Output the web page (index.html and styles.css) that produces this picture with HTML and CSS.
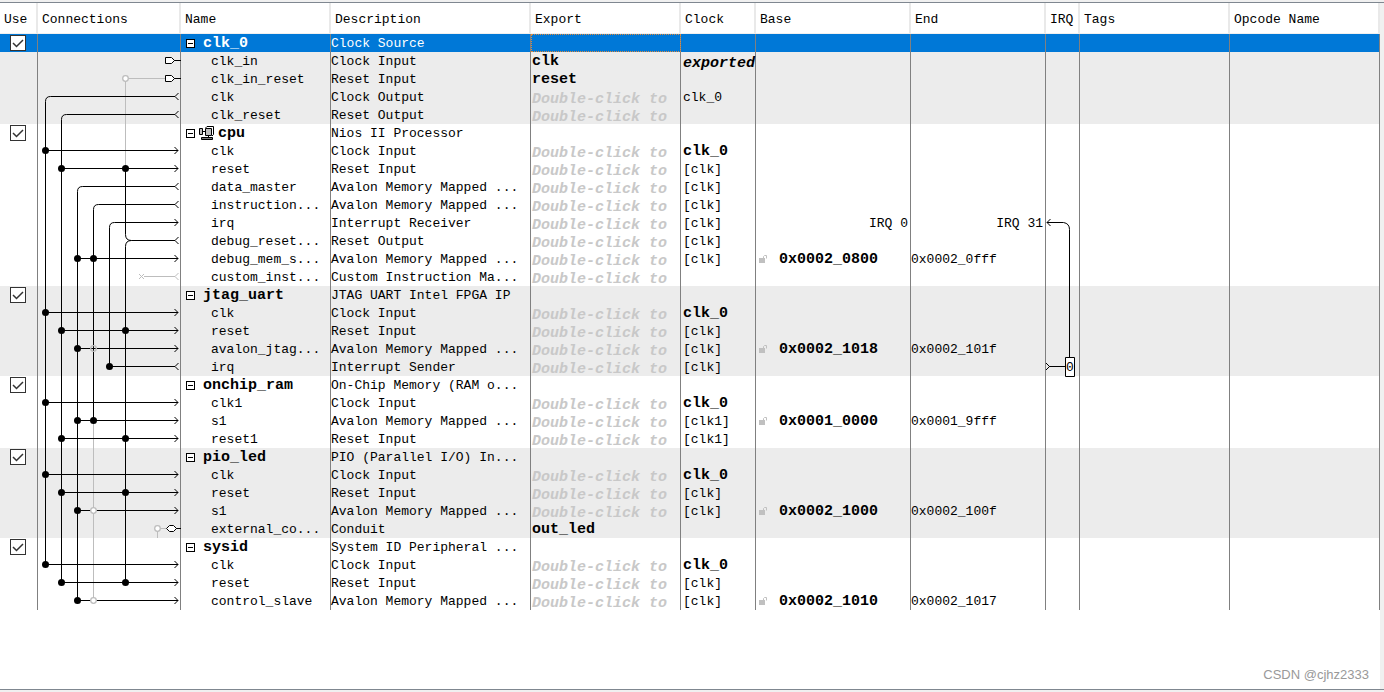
FILE: index.html
```
<!DOCTYPE html>
<html lang="en">
<head>
<meta charset="utf-8">
<title>System Contents</title>
<link rel="stylesheet" href="styles.css">
<script src="table.js" defer></script>
</head>
<body>
<svg class="defs" aria-hidden="true">
  <symbol id="cpu" viewBox="0 0 15 14">
    <path d="M6.500 2.500h6v7h-6z" fill="#c0c0c0" stroke="#000"/>
    <path d="M6.500 2L8 .5H14.500V8.500L13 10" fill="none" stroke="#000"/>
    <path d="M.5 2.500h3v6h-3z" fill="#c0c0c0" stroke="#000"/>
    <path d="M4 5.500h2M9.500 9.500v2M2.500 11.500h11v2h-11z" fill="#777" stroke="#000"/>
  </symbol>
  <symbol id="lock" viewBox="0 0 9 8">
    <path d="M0 3h6v5H0z" fill="#c0c0c0"/>
    <path d="M4.500 3V1.500L5.500 .5H7.500V3.500" fill="none" stroke="#c0c0c0"/>
  </symbol>
  <symbol id="wires" viewBox="38 34 143 576">
    <g fill="none" stroke="#bdbdbd">
      <path d="M125.500 78.500H165M125.500 78.500V168M93.500 420V600M157.500 528.500H166M157.500 528V538M144 276.500H175M178.500 273L175 276.500L178.500 280M139 274L144 279M139 279L144 274"/>
    </g>
    <g fill="none" stroke="#000">
      <path d="M45.500 564V101.500Q45.500 96.500 50.500 96.500H175M61.500 582V119.500Q61.500 114.500 66.500 114.500H175M77.500 600V191.500Q77.500 186.500 82.500 186.500H175M93.500 420V209.500Q93.500 204.500 98.500 204.500H175M109.500 366V227.500Q109.500 222.500 114.500 222.500H178M125.500 168V234.500Q125.500 240.500 131.500 240.500H175M125.500 582V246.500Q125.500 240.500 131.500 240.500M109.500 366.500H175"/>
      <path d="M45 150.500H178M61 168.500H178M77 258.500H178M45 312.500H178M61 330.500H178M77 348.500H178M45 402.500H178M77 420.500H178M61 438.500H178M45 474.500H178M61 492.500H178M77 510.500H178M45 564.500H178M61 582.500H178M77 600.500H178"/>
      <path d="M178.500 93L175 96.500L178.500 100M178.500 111L175 114.500L178.500 118M178.500 183L175 186.500L178.500 190M178.500 201L175 204.500L178.500 208M178.500 237L175 240.500L178.500 244M178.500 363L175 366.500L178.500 370"/>
      <path d="M174.500 147L178 150.500L174.500 154M174.500 165L178 168.500L174.500 172M174.500 219L178 222.500L174.500 226M174.500 255L178 258.500L174.500 262M174.500 309L178 312.500L174.500 316M174.500 327L178 330.500L174.500 334M174.500 345L178 348.500L174.500 352M174.500 399L178 402.500L174.500 406M174.500 417L178 420.500L174.500 424M174.500 435L178 438.500L174.500 442M174.500 471L178 474.500L174.500 478M174.500 489L178 492.500L174.500 496M174.500 507L178 510.500L174.500 514M174.500 561L178 564.500L174.500 568M174.500 579L178 582.500L174.500 586M174.500 597L178 600.500L174.500 604"/>
      <path d="M174 60.500H181M174 78.500H181M176 528.500H181"/>
    </g>
    <g fill="#fff" stroke="#bdbdbd" stroke-width="1.300">
      <circle cx="125.500" cy="78.500" r="2.800"/><circle cx="157.500" cy="528.500" r="2.800"/>
      <circle cx="93.500" cy="510.500" r="2.800"/><circle cx="93.500" cy="600.500" r="2.800"/>
      <circle cx="93.500" cy="348.500" r="2.800" fill="none"/>
    </g>
    <path d="M165.500 57.500H171.500L174.500 60.500L171.500 63.500H165.500ZM165.500 75.500H171.500L174.500 78.500L171.500 81.500H165.500ZM166.500 528.500L169.500 525.500H173.500L176.500 528.500L173.500 531.500H169.500Z" fill="#fff" stroke="#000"/>
    <g>
      <circle cx="45.500" cy="150.500" r="3.500"/><circle cx="61.500" cy="168.500" r="3.500"/><circle cx="125.500" cy="168.500" r="3.500"/>
      <circle cx="77.500" cy="258.500" r="3.500"/><circle cx="93.500" cy="258.500" r="3.500"/><circle cx="45.500" cy="312.500" r="3.500"/>
      <circle cx="61.500" cy="330.500" r="3.500"/><circle cx="125.500" cy="330.500" r="3.500"/><circle cx="77.500" cy="348.500" r="3.500"/>
      <circle cx="109.500" cy="366.500" r="3.500"/><circle cx="45.500" cy="402.500" r="3.500"/><circle cx="77.500" cy="420.500" r="3.500"/>
      <circle cx="93.500" cy="420.500" r="3.500"/><circle cx="61.500" cy="438.500" r="3.500"/><circle cx="125.500" cy="438.500" r="3.500"/>
      <circle cx="45.500" cy="474.500" r="3.500"/><circle cx="61.500" cy="492.500" r="3.500"/><circle cx="125.500" cy="492.500" r="3.500"/>
      <circle cx="77.500" cy="510.500" r="3.500"/><circle cx="45.500" cy="564.500" r="3.500"/><circle cx="61.500" cy="582.500" r="3.500"/>
      <circle cx="125.500" cy="582.500" r="3.500"/><circle cx="77.500" cy="600.500" r="3.500"/>
    </g>
  </symbol>
  <symbol id="irqwire" viewBox="1046 214 33 164">
    <path d="M1047 222.500H1063.500Q1069.500 223.500 1069.500 229.500V357M1050.500 219L1047 222.500L1050.500 226M1046 363L1049.500 366.500L1046 370M1049 366.500H1065" fill="none" stroke="#000"/>
    <path d="M1065.500 357.500h9v19h-9z" fill="#fff" stroke="#000"/>
  </symbol>
</svg>
<main class="panel">
  <table class="contents">
    <colgroup>
      <col class="c-use"><col class="c-conn"><col class="c-name"><col class="c-desc"><col class="c-export"><col class="c-clock"><col class="c-base"><col class="c-end"><col class="c-irq"><col class="c-tags"><col>
    </colgroup>
    <thead>
      <tr><th>Use</th><th>Connections</th><th>Name</th><th>Description</th><th>Export</th><th>Clock</th><th>Base</th><th>End</th><th>IRQ</th><th>Tags</th><th>Opcode Name</th></tr>
    </thead>
  </table>
  <footer class="watermark">CSDN @cjhz2333</footer>
</main>
</body>
</html>
```
FILE: table.js
```
const HINT = "Double-click to";
const AVALON = "Avalon Memory Mapped ...";

// Port rows: [name, description, export, clock, base, end]
const modules = [
  { name: "clk_0", desc: "Clock Source", selected: true, ports: [
    ["clk_in", "Clock Input", "clk", "exported"],
    ["clk_in_reset", "Reset Input", "reset"],
    ["clk", "Clock Output", HINT, "clk_0 "],
    ["clk_reset", "Reset Output", HINT]] },
  { name: "cpu", desc: "Nios II Processor", icon: true, ports: [
    ["clk", "Clock Input", HINT, "clk_0"],
    ["reset", "Reset Input", HINT, "[clk]"],
    ["data_master", AVALON, HINT, "[clk]"],
    ["instruction...", AVALON, HINT, "[clk]"],
    ["irq", "Interrupt Receiver", HINT, "[clk]", "IRQ 0", "IRQ 31"],
    ["debug_reset...", "Reset Output", HINT, "[clk]"],
    ["debug_mem_s...", AVALON, HINT, "[clk]", "0x0002_0800", "0x0002_0fff"],
    ["custom_inst...", "Custom Instruction Ma...", HINT]] },
  { name: "jtag_uart", desc: "JTAG UART Intel FPGA IP", ports: [
    ["clk", "Clock Input", HINT, "clk_0"],
    ["reset", "Reset Input", HINT, "[clk]"],
    ["avalon_jtag...", AVALON, HINT, "[clk]", "0x0002_1018", "0x0002_101f"],
    ["irq", "Interrupt Sender", HINT, "[clk]"]] },
  { name: "onchip_ram", desc: "On-Chip Memory (RAM o...", ports: [
    ["clk1", "Clock Input", HINT, "clk_0"],
    ["s1", AVALON, HINT, "[clk1]", "0x0001_0000", "0x0001_9fff"],
    ["reset1", "Reset Input", HINT, "[clk1]"]] },
  { name: "pio_led", desc: "PIO (Parallel I/O) In...", ports: [
    ["clk", "Clock Input", HINT, "clk_0"],
    ["reset", "Reset Input", HINT, "[clk]"],
    ["s1", AVALON, HINT, "[clk]", "0x0002_1000", "0x0002_100f"],
    ["external_co...", "Conduit", "out_led"]] },
  { name: "sysid", desc: "System ID Peripheral ...", ports: [
    ["clk", "Clock Input", HINT, "clk_0"],
    ["reset", "Reset Input", HINT, "[clk]"],
    ["control_slave", AVALON, HINT, "[clk]", "0x0002_1010", "0x0002_1017"]] }
];

const td = (html = "", cls = "") => `<td class="${cls}">${html}</td>`;

function moduleRow(m) {
  const wires = m.selected ? '<svg class="wires"><use href="#wires"/></svg>' : "";
  const icon = m.icon ? '<svg class="cpu"><use href="#cpu"/></svg>' : "";
  return `<tr class="module${m.selected ? " selected" : ""}">` +
    td(`<input type="checkbox" checked aria-label="Use ${m.name}">`, "use") +
    td(wires, "conn") +
    td(`<div class="title"><button class="toggle" aria-label="Collapse ${m.name}"></button>${icon}<span>${m.name}</span></div>`, "strong") +
    td(m.desc) + td("", m.selected ? "focus" : "") +
    td().repeat(6) + "</tr>";
}

function portRow([name, desc, exp, clock = "", base = "", end = ""]) {
  const isIrq = base.startsWith("IRQ");
  const clockClass = clock === "exported" ? "clock strong slanted" : clock === "clk_0" ? "clock strong" : "clock";
  const baseCell = !base ? td() : isIrq ? td(base, "range") :
    td(`<div class="address"><svg class="lock"><use href="#lock"/></svg><span>${base}</span></div>`, "strong");
  const irqWire = '<svg class="irqwire"><use href="#irqwire"/></svg><span class="irqnum">0</span>';
  return "<tr>" + td() + td() + td(name, "port") + td(desc) +
    td(exp, exp === HINT ? "strong slanted hint" : "strong") +
    td(clock.trim(), clockClass) + baseCell + td(end, isIrq ? "range" : "") +
    td(isIrq ? irqWire : "", isIrq ? "irq" : "") + td() + td() + "</tr>";
}

document.querySelector(".contents").insertAdjacentHTML("beforeend",
  modules.map(m => `<tbody>${moduleRow(m)}${m.ports.map(portRow).join("")}</tbody>`).join(""));
```
FILE: styles.css
```
* { box-sizing: border-box; }

body {
  margin: 0;
  min-height: 100vh;
  padding: 2px 0;
  display: flex;
  flex-direction: column;
  background: #f0f0f0;
  color: #000;
  font: 13px/15px "Liberation Mono", monospace;
}

.defs { display: none; }

.panel {
  flex: 1;
  display: flex;
  flex-direction: column;
  justify-content: space-between;
  border-top: 1px solid #7f8790;
  border-bottom: 1px solid #7f8790;
  padding-right: 4px;
  background: linear-gradient(#fff, #fff) content-box;
}

.contents {
  width: 100%;
  table-layout: fixed;
  border-collapse: separate;
  border-spacing: 0;
}

.c-use { width: 38px; }
.c-conn { width: 143px; }
.c-name, .c-export, .c-tags { width: 150px; }
.c-desc { width: 200px; }
.c-clock { width: 75px; }
.c-base { width: 155px; }
.c-end { width: 135px; }
.c-irq { width: 34px; }

th {
  height: 31px;
  padding: 3px 0 0 4px;
  border-right: 2px solid #e9e9e9;
  border-bottom: 1px solid #f0f0f0;
  text-align: left;
  font-weight: normal;
  white-space: nowrap;
}

td {
  height: 18px;
  padding: 2px 0 0;
  border-right: 1px solid #808080;
  vertical-align: top;
  white-space: nowrap;
}

tbody:nth-of-type(odd) { background: #ececec; }
.selected { background: #0078d7; color: #fff; }

.strong { padding-left: 1px; font-size: 15px; font-weight: bold; }
.slanted { font-style: italic; line-height: 12px; padding-top: 6px; }
.hint { color: #c8c8c8; }
.port { padding-left: 30px; }
.clock { padding-left: 2px; }
.range { padding-right: 2px; text-align: right; }
.focus { outline: 1px dotted #e08a3c; outline-offset: -1px; }

.use { padding: 1px 0 0 10px; }
.use input {
  display: block;
  appearance: none;
  width: 16px;
  height: 16px;
  margin: 0;
  border: 1px solid #333;
  background: #fff url("data:image/svg+xml,%3Csvg xmlns='http://www.w3.org/2000/svg' viewBox='0 0 14 14'%3E%3Cpath d='M2 7l3.500 3.500L12 4' fill='none' stroke='%23333' stroke-width='1.500'/%3E%3C/svg%3E");
}

.conn, .irq { position: relative; }
.wires, .irqwire { position: absolute; top: 0; left: 0; }
.wires { width: 143px; height: 576px; }
.irqwire { width: 33px; height: 164px; }
.irqnum { position: absolute; top: 146px; left: 20px; }

.title, .address { display: flex; }
.title { padding-left: 4px; }
.toggle {
  width: 9px;
  height: 9px;
  margin: 3px 8px 0 0;
  padding: 0;
  border: 1px solid #000;
  background: linear-gradient(#000, #000) center / 5px 1px no-repeat #fff;
}
.cpu { width: 15px; height: 14px; margin: 0 4px 0 -4px; }
.address { gap: 11px; padding-left: 2px; }
.lock { width: 9px; height: 8px; margin-top: 3px; }

.watermark {
  padding: 0 11px 6px;
  color: #999;
  font: 13px/16px "Liberation Sans", sans-serif;
  text-align: right;
}
```
